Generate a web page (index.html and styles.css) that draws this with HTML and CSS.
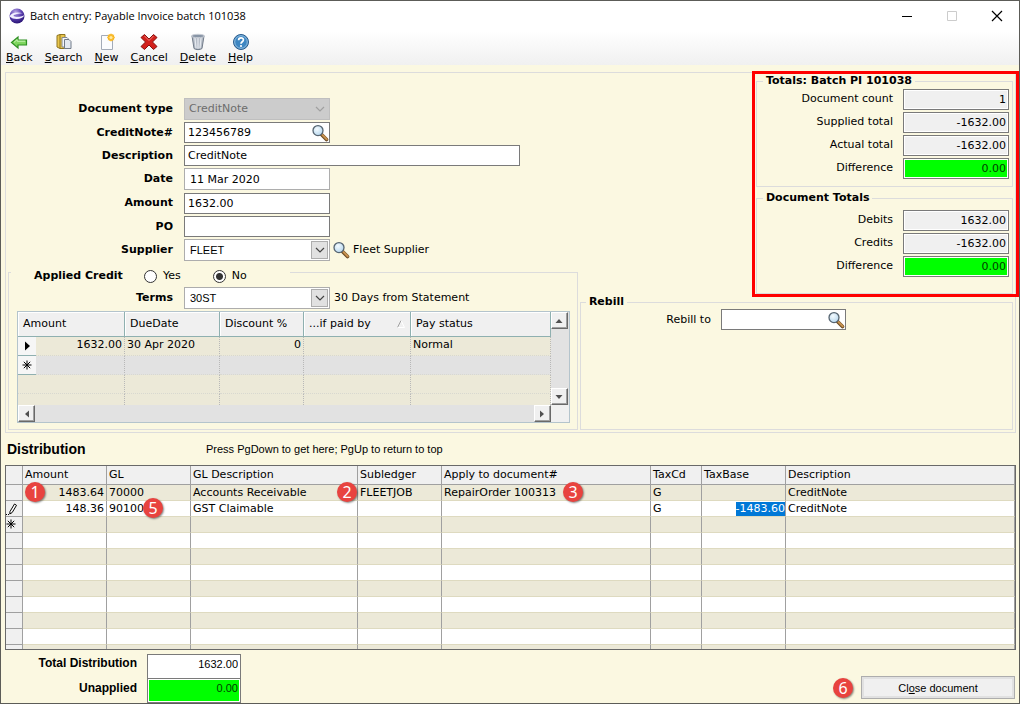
FILE: index.html
```
<!DOCTYPE html>
<html lang="en">
<head>
  <meta charset="UTF-8" />
  <meta name="viewport" content="width=device-width, initial-scale=1.0"/>
  <title>Batch entry: Payable Invoice batch 101038</title>
  <link rel="stylesheet" href="styles.css">
</head>
<body>
  <!-- shared icons -->
  <svg class="sprite" aria-hidden="true">
    <defs>
      <radialGradient id="glass" cx="0.4" cy="0.35" r="0.7">
        <stop offset="0" stop-color="#f4fbff"/>
        <stop offset="1" stop-color="#b4d6ee"/>
      </radialGradient>
    </defs>
    <symbol id="lens" viewBox="0 0 18 18">
      <path d="M10.5 10.5l5 5" stroke="#6b4a22" stroke-width="3.6" stroke-linecap="round"/>
      <path d="M11.5 11l4.2 4.2" stroke="#c89350" stroke-width="2" stroke-linecap="round"/>
      <circle cx="7" cy="6.6" r="5" fill="url(#glass)" stroke="#566470" stroke-width="1.3"/>
    </symbol>
    <symbol id="chevron" viewBox="0 0 10 6">
      <path d="M1 1l4 4 4-4" fill="none" stroke="currentColor" stroke-width="1.2"/>
    </symbol>
    <symbol id="star" viewBox="0 0 10 10">
      <path d="M5 0.5v9M0.5 5h9M1.8 1.8l6.4 6.4M8.2 1.8L1.8 8.2" stroke="#000" stroke-width="1"/>
    </symbol>
  </svg>

  <div class="window">
    <header class="titlebar">
      <svg class="app-icon" viewBox="0 0 16 16">
        <defs>
          <radialGradient id="orb" cx="0.4" cy="0.25" r="0.8">
            <stop offset="0" stop-color="#b9a8e6"/>
            <stop offset="0.5" stop-color="#5b3fb0"/>
            <stop offset="1" stop-color="#24106e"/>
          </radialGradient>
        </defs>
        <circle cx="8" cy="8" r="7.5" fill="url(#orb)"/>
        <path d="M0.500 8.500C2 4.500 8 3.800 14 5.300C9.500 5.500 5 6.300 4.500 8C6 9 11 9.400 15.300 7.200C13.500 11.500 5 12.500 0.500 8.500z" fill="#f3f0ff"/>
      </svg>
      <h1>Batch entry: Payable Invoice batch 101038</h1>
      <div class="window-buttons">
        <button type="button" aria-label="Minimize"><svg viewBox="0 0 12 12"><path d="M1 6.500h10" stroke="#000"/></svg></button>
        <button type="button" aria-label="Maximize" disabled><svg viewBox="0 0 12 12"><path d="M1.500 1.500h9v9h-9z" fill="none" stroke="#ccc"/></svg></button>
        <button type="button" aria-label="Close"><svg viewBox="0 0 12 12"><path d="M1 1l10 10M11 1L1 11" stroke="#000" stroke-width="1.2"/></svg></button>
      </div>
    </header>

    <nav class="toolbar">
      <button type="button">
        <svg viewBox="0 0 18 18"><path d="M1.500 9.500L8 4v3h8.500v5H8v3z" fill="#7fd65f" stroke="#2f8f22" stroke-width="1.200"/><path d="M4 9.300L7.200 6.600v1.600h8" fill="none" stroke="#c9f5b5"/></svg>
        <span><u>B</u>ack</span>
      </button>
      <button type="button">
        <svg viewBox="0 0 18 18"><path d="M2 2.500l3-1h5v14H5l-3-1.500z" fill="#e9c64c" stroke="#8f7420"/><path d="M5 1.500v14" stroke="#8f7420"/><path d="M7 4.500h5l1 1v8.500H7z" fill="#f4f6fa" stroke="#808894"/><path d="M9.500 6.500h4.500l2 2v7H9.500z" fill="#e3e9f1" stroke="#707a88"/></svg>
        <span><u>S</u>earch</span>
      </button>
      <button type="button">
        <svg viewBox="0 0 18 18"><path d="M3.500 2.500h11v14h-11z" fill="#fbfcfe" stroke="#a3abb8"/><circle cx="13" cy="4.500" r="3.400" fill="#f7b21c"/><path d="M13 0.500v8M9 4.500h8M10.300 1.800l5.400 5.400M15.700 1.800l-5.400 5.400" stroke="#f9c440" stroke-width="0.900"/><circle cx="13" cy="4.500" r="1.500" fill="#ffe9a0"/></svg>
        <span><u>N</u>ew</span>
      </button>
      <button type="button">
        <svg viewBox="0 0 18 18"><path d="M4.500 1.500L9 6l4.500-4.500 3.500 3L12.500 9l4.500 4.500-3.500 3L9 12l-4.500 4.500-3.500-3L5.500 9 1 4.500z" fill="#d3201c" stroke="#85100d" stroke-width="1"/><path d="M4.500 3L9 7.500 13.500 3" fill="none" stroke="#f08078"/></svg>
        <span><u>C</u>ancel</span>
      </button>
      <button type="button">
        <svg viewBox="0 0 18 18"><path d="M3 3l2 12.500c1.500 1.500 6.500 1.500 8 0L15 3z" fill="#b5bcc6" stroke="#727c8a"/><path d="M6 5l1 10M9 5v10.500M12 5l-1 10" stroke="#e6eaf0" stroke-width="1.200"/><ellipse cx="9" cy="3" rx="6.500" ry="1.700" fill="#8794a5" stroke="#c9ced6"/></svg>
        <span><u>D</u>elete</span>
      </button>
      <button type="button">
        <svg viewBox="0 0 18 18"><circle cx="9" cy="9" r="7.500" fill="#3d86c2" stroke="#2a5c8c"/><circle cx="9" cy="9" r="6.300" fill="none" stroke="#a6cbe8" stroke-width="0.800"/><path d="M6.600 7.300C6.600 4 11.600 4.200 11.400 7C11.300 8.800 9 8.800 9 10.800" fill="none" stroke="#fff" stroke-width="1.700"/><circle cx="9" cy="13" r="1.100" fill="#fff"/></svg>
        <span><u>H</u>elp</span>
      </button>
    </nav>

    <main>
      <form class="document">
        <div class="left">
          <div class="fields">
            <div class="row tall">
              <label for="doctype">Document type</label>
              <div class="combo">
                <select id="doctype" disabled><option>CreditNote</option></select>
                <span class="arrow"><svg><use href="#chevron"/></svg></span>
              </div>
            </div>
            <div class="row">
              <label for="credit-no">CreditNote#</label>
              <div class="lookup">
                <input type="text" id="credit-no" value="123456789" />
                <button type="button" aria-label="Find credit note"><svg><use href="#lens"/></svg></button>
              </div>
            </div>
            <div class="row">
              <label for="description">Description</label>
              <input type="text" id="description" class="wide" value="CreditNote" />
            </div>
            <div class="row tall">
              <label for="date">Date</label>
              <input type="text" id="date" class="light" value="11 Mar 2020" />
            </div>
            <div class="row tall">
              <label for="amount">Amount</label>
              <input type="text" id="amount" value="1632.00" />
            </div>
            <div class="row">
              <label for="po">PO</label>
              <input type="text" id="po" />
            </div>
            <div class="row tall">
              <label for="supplier">Supplier</label>
              <div class="combo">
                <select id="supplier"><option>FLEET</option></select>
                <span class="arrow"><svg><use href="#chevron"/></svg></span>
              </div>
              <button type="button" class="lens" aria-label="Find supplier"><svg><use href="#lens"/></svg></button>
              <span>Fleet Supplier</span>
            </div>
          </div>

          <fieldset class="credit">
            <legend>
              <b>Applied Credit</b>
              <label><input type="radio" name="applied" />Yes</label>
              <label><input type="radio" name="applied" checked />No</label>
            </legend>
            <div class="row tall">
              <label for="terms">Terms</label>
              <div class="combo">
                <select id="terms"><option>30ST</option></select>
                <span class="arrow"><svg><use href="#chevron"/></svg></span>
              </div>
              <span>30 Days from Statement</span>
            </div>

            <div class="schedule">
              <div class="schedule-view">
                <table>
                  <colgroup>
                    <col class="c-mark"><col class="c-amount"><col class="c-due"><col class="c-disc"><col class="c-paid"><col>
                  </colgroup>
                  <thead>
                    <tr>
                      <th colspan="2">Amount</th>
                      <th>DueDate</th>
                      <th>Discount %</th>
                      <th><div class="sorted">...if paid by <svg viewBox="0 0 8 8"><path d="M4 0.500L0.500 7.500" fill="none" stroke="#a0a0a0"/><path d="M4 0.500L7.500 7.500H0.500" fill="none" stroke="#fff"/></svg></div></th>
                      <th>Pay status</th>
                    </tr>
                  </thead>
                  <tbody>
                    <tr><td class="mark"><svg viewBox="0 0 10 10"><path d="M3 0.500v9L8 5z"/></svg></td><td class="num">1632.00</td><td>30 Apr 2020</td><td class="num">0</td><td></td><td>Normal</td></tr>
                    <tr class="new"><td class="mark"><svg><use href="#star"/></svg></td><td></td><td></td><td></td><td></td><td></td></tr>
                    <tr><td colspan="2"></td><td></td><td></td><td></td><td></td></tr>
                    <tr><td colspan="2"></td><td></td><td></td><td></td><td></td></tr>
                  </tbody>
                </table>
              </div>
              <div class="scroll-y">
                <button type="button" aria-label="Scroll up"><svg viewBox="0 0 8 8"><path d="M0.500 6L4 2l3.500 4z"/></svg></button>
                <button type="button" aria-label="Scroll down"><svg viewBox="0 0 8 8"><path d="M0.500 2L4 6l3.500-4z"/></svg></button>
              </div>
              <div class="scroll-x">
                <button type="button" aria-label="Scroll left"><svg viewBox="0 0 8 8"><path d="M6 0.500L2 4l4 3.500z"/></svg></button>
                <button type="button" aria-label="Scroll right"><svg viewBox="0 0 8 8"><path d="M2 0.500L6 4 2 7.500z"/></svg></button>
              </div>
            </div>
          </fieldset>
        </div>

        <div class="right">
          <div class="totals">
            <fieldset>
              <legend>Totals: Batch PI 101038</legend>
              <div class="total"><label for="doc-count">Document count</label><input type="text" id="doc-count" value="1" readonly /></div>
              <div class="total"><label for="supplied">Supplied total</label><input type="text" id="supplied" value="-1632.00" readonly /></div>
              <div class="total"><label for="actual">Actual total</label><input type="text" id="actual" value="-1632.00" readonly /></div>
              <div class="total"><label for="batch-diff">Difference</label><input type="text" id="batch-diff" class="ok" value="0.00" readonly /></div>
            </fieldset>
            <fieldset class="doc-totals">
              <legend>Document Totals</legend>
              <div class="total"><label for="debits">Debits</label><input type="text" id="debits" value="1632.00" readonly /></div>
              <div class="total"><label for="credits">Credits</label><input type="text" id="credits" value="-1632.00" readonly /></div>
              <div class="total"><label for="doc-diff">Difference</label><input type="text" id="doc-diff" class="ok" value="0.00" readonly /></div>
            </fieldset>
            <div class="highlight"></div>
          </div>
          <fieldset class="rebill">
            <legend>Rebill</legend>
            <div class="rebill-row">
              <label for="rebill">Rebill to</label>
              <div class="lookup">
                <input type="text" id="rebill" />
                <button type="button" aria-label="Find rebill account"><svg><use href="#lens"/></svg></button>
              </div>
            </div>
          </fieldset>
        </div>
      </form>

      <div class="dist-head">
        <h2>Distribution</h2>
        <span>Press PgDown to get here; PgUp to return to top</span>
      </div>

      <div class="dist">
        <table>
          <colgroup>
            <col class="d-mark"><col class="d-std"><col class="d-std"><col class="d-gldesc"><col class="d-std"><col class="d-apply"><col class="d-tax"><col class="d-std"><col>
          </colgroup>
          <thead>
            <tr><th></th><th>Amount</th><th>GL</th><th>GL Description</th><th>Subledger</th><th>Apply to document#</th><th>TaxCd</th><th>TaxBase</th><th>Description</th></tr>
          </thead>
          <tbody>
            <tr>
              <td></td>
              <td class="num"><span class="badge at-start">1</span>1483.64</td>
              <td>70000</td>
              <td>Accounts Receivable</td>
              <td><span class="badge at-edge">2</span>FLEETJOB</td>
              <td>RepairOrder 100313<span class="badge after">3</span></td>
              <td>G</td>
              <td></td>
              <td>CreditNote</td>
            </tr>
            <tr>
              <td class="mark"><svg viewBox="0 0 12 12"><path d="M4 8.500L8.500 1l2 1.300L6.200 9.500 3.800 11z" fill="#fff" stroke="#000"/><path d="M0 11.500h1M2 11.500h1" stroke="#000"/></svg></td>
              <td class="num">148.36</td>
              <td>90100<span class="badge after-tight">5</span></td>
              <td>GST Claimable</td>
              <td></td>
              <td></td>
              <td>G</td>
              <td class="num edit"><span class="selected">-1483.60</span></td>
              <td>CreditNote</td>
            </tr>
            <tr><td class="mark"><svg viewBox="0 0 12 12"><use href="#star" width="10" height="10"/></svg></td><td></td><td></td><td></td><td></td><td></td><td></td><td></td><td></td></tr>
            <tr><td></td><td></td><td></td><td></td><td></td><td></td><td></td><td></td><td></td></tr>
            <tr><td></td><td></td><td></td><td></td><td></td><td></td><td></td><td></td><td></td></tr>
            <tr><td></td><td></td><td></td><td></td><td></td><td></td><td></td><td></td><td></td></tr>
            <tr><td></td><td></td><td></td><td></td><td></td><td></td><td></td><td></td><td></td></tr>
            <tr><td></td><td></td><td></td><td></td><td></td><td></td><td></td><td></td><td></td></tr>
            <tr><td></td><td></td><td></td><td></td><td></td><td></td><td></td><td></td><td></td></tr>
            <tr><td></td><td></td><td></td><td></td><td></td><td></td><td></td><td></td><td></td></tr>
            <tr><td></td><td></td><td></td><td></td><td></td><td></td><td></td><td></td><td></td></tr>
          </tbody>
        </table>
      </div>
    </main>

    <footer>
      <div class="sums">
        <label for="total-dist">Total Distribution</label>
        <input type="text" id="total-dist" value="1632.00" readonly />
        <label for="unapplied">Unapplied</label>
        <input type="text" id="unapplied" class="ok" value="0.00" readonly />
      </div>
      <div class="actions">
        <span class="badge">6</span>
        <button type="button" class="close-btn"><span>Cl<u>o</u>se document</span></button>
      </div>
    </footer>
  </div>
</body>
</html>
```
FILE: styles.css
```
* {
  box-sizing: border-box;
}
body {
  margin: 0;
  font-family: "DejaVu Sans", Verdana, sans-serif;
  font-size: 11px;
  line-height: 14px;
  color: #000;
}
input, select, button {
  font: inherit;
  color: inherit;
  margin: 0;
  border-radius: 0;
}
button {
  padding: 0;
  border: none;
  background: none;
}
fieldset {
  margin: 0;
  padding: 0;
  border: 1px solid #dcdcdc;
  min-width: 0;
}
legend {
  margin-left: 6px;
  padding: 0 3px;
  font-weight: bold;
}
.sprite {
  position: absolute;
  width: 0;
  height: 0;
}

.window {
  display: flex;
  flex-direction: column;
  height: 100vh;
  border: 1px solid #5c5c58;
  background: #fbf8e1;
}

/* title bar */
.titlebar {
  display: flex;
  align-items: center;
  height: 30px;
  padding-left: 8px;
  background: #fff;
}
.app-icon {
  width: 16px;
  height: 16px;
}
.titlebar h1 {
  flex: 1;
  margin: 0 0 0 5px;
  font: 11px/16px "Open Sans", "Segoe UI", sans-serif;
}
.window-buttons {
  display: flex;
}
.window-buttons button {
  width: 45px;
  height: 30px;
}
.window-buttons svg {
  width: 12px;
  height: 12px;
  vertical-align: middle;
}

/* toolbar */
.toolbar {
  display: flex;
  gap: 12px;
  height: 34px;
  padding: 2px 5px 0;
  background: linear-gradient(#fff, #f0f0f0);
}
.toolbar button {
  display: flex;
  flex-direction: column;
  align-items: center;
}
.toolbar svg {
  width: 18px;
  height: 18px;
}

main {
  flex: 1;
  display: flex;
  flex-direction: column;
  min-height: 0;
  padding: 7px 3px 0 4px;
}

/* document form */
.document {
  display: grid;
  grid-template-columns: 25fr 19fr;
  column-gap: 2px;
  padding: 0 2px 2px;
  border: 1px solid #dcdcdc;
}
.left {
  padding-top: 25px;
}
.fields {
  display: flex;
  flex-direction: column;
  gap: 2px;
}
.row {
  display: flex;
  align-items: center;
  height: 21px;
}
.row.tall {
  height: 22px;
}
.row > label {
  width: 165px;
  margin-right: 11px;
  text-align: right;
  font-weight: bold;
}
.fields input, .lookup input, .total input {
  width: 146px;
  height: 21px;
  padding: 0 3px;
  border: 1px solid #7a7a7a;
  background: #fff;
}
.fields input.wide {
  width: 336px;
}
.fields input.light {
  height: 22px;
  padding-left: 5px;
  border-color: #adadad;
}
.combo, .lookup {
  position: relative;
}
.combo select {
  display: block;
  width: 146px;
  height: 22px;
  padding: 0 20px 0 5px;
  border: 1px solid #adadad;
  background: #fff;
  appearance: none;
  font-family: "Liberation Sans", Arial, sans-serif;
}
.combo select:disabled {
  padding-left: 4px;
  border-color: #bfbfbf;
  background: #ccc;
  color: #6d6d6d;
  opacity: 1;
  font-family: inherit;
}
.combo .arrow {
  position: absolute;
  top: 2px;
  right: 2px;
  bottom: 2px;
  display: flex;
  align-items: center;
  justify-content: center;
  width: 17px;
  border: 1px solid #adadad;
  background: #e1e1e1;
  color: #444;
  pointer-events: none;
}
.combo select:disabled + .arrow {
  border-color: transparent;
  background: none;
  color: #a0a0a0;
}
.arrow svg {
  width: 10px;
  height: 6px;
}
.lookup button {
  position: absolute;
  top: 2px;
  right: 1px;
}
.lookup svg, .lens svg {
  display: block;
  width: 18px;
  height: 18px;
}
.row .lens {
  margin: 0 3px 0 2px;
}
.row > span {
  margin-left: 4px;
}
.row .lens + span {
  margin-left: 0;
}

/* applied credit */
.credit {
  padding: 0 7px 6px 8px;
}
.credit legend {
  display: flex;
  align-items: center;
  height: 22px;
  margin-left: -6px;
  padding: 8px 0 0 23px;
  width: 279px;
}
.credit legend label {
  display: flex;
  align-items: center;
  font-weight: normal;
}
.credit legend b {
  width: 110px;
}
.credit legend label + label {
  margin-left: 32px;
}
.credit input[type=radio] {
  appearance: none;
  width: 13px;
  height: 13px;
  margin: 0 6px 0 0;
  border: 1px solid #333;
  border-radius: 50%;
  background: #fff;
}
.credit input[type=radio]:checked {
  background: radial-gradient(#333 0 3px, #fff 4px);
}
.credit .row {
  margin-top: 4px;
}
.credit .row > label {
  width: 156px;
  margin-right: 11px;
}

.schedule {
  display: grid;
  grid-template-columns: 1fr 18px;
  grid-template-rows: 93px 17px;
  margin-top: 2px;
  border: 1px solid #b4c4cc;
  background: #f0f0f0;
}
.schedule-view {
  overflow: hidden;
}
table {
  width: 100%;
  table-layout: fixed;
  border-collapse: separate;
  border-spacing: 0;
}
th {
  font-weight: normal;
  text-align: left;
}
th, td {
  padding: 0 2px;
  white-space: nowrap;
}
.num {
  text-align: right;
}
.c-mark { width: 18px; }
.c-amount { width: 89px; }
.c-due { width: 95px; }
.c-disc { width: 84px; }
.c-paid { width: 107px; }

.schedule th {
  height: 25px;
  padding: 0 5px;
  border-right: 1px solid #8fb0b0;
  border-bottom: 1px solid #8fb0b0;
  background: #f0f0f0;
  box-shadow: inset 1px 1px #fff;
}
.sorted {
  display: flex;
  align-items: center;
  justify-content: space-between;
}
.sorted svg {
  width: 8px;
  height: 8px;
}
.schedule td {
  height: 19px;
  padding-bottom: 3px;
  border-right: 1px dotted #b8b8b8;
  border-bottom: 1px dotted #d8d8d0;
  background: #ece9d8;
}
.schedule .new td {
  background: #e2e2e2;
}
.schedule td.mark, .schedule .new td.mark {
  padding: 0;
  border-right: none;
  border-bottom: 1px solid #8fb0b0;
  background: #f6f6f6;
  text-align: center;
}
.mark svg {
  display: block;
  width: 10px;
  height: 10px;
  margin: 0 auto;
}
.scroll-y, .scroll-x {
  display: flex;
  justify-content: space-between;
  background: #e2e2e2;
}
.scroll-y {
  flex-direction: column;
}
.scroll-y button, .scroll-x button {
  display: flex;
  align-items: center;
  justify-content: center;
  width: 17px;
  height: 17px;
  border: 1px solid;
  border-color: #fff #696969 #696969 #fff;
  background: #f0f0f0;
  box-shadow: inset -1px -1px #a0a0a0;
}
.scroll-y svg, .scroll-x svg {
  width: 8px;
  height: 8px;
  fill: #505050;
}

/* totals */
.right {
  display: flex;
  flex-direction: column;
  padding-top: 1px;
}
.totals {
  position: relative;
  align-self: flex-end;
  width: 257px;
}
.total {
  display: flex;
  justify-content: flex-end;
  height: 21px;
  margin: 0 3px 2px 0;
}
.total label {
  margin-right: 10px;
  line-height: 20px;
}
.total input {
  width: 106px;
  padding: 0 2px;
  text-align: right;
  background: #f0f0f0;
  box-shadow: inset 0 0 0 1px #fff;
}
.total input.ok, .sums input.ok {
  background: #0f0;
  color: #003c00;
}
.totals fieldset {
  padding: 1px 0 5px;
}
.totals .doc-totals {
  margin-top: 4px;
  padding: 5px 0 14px;
}
.highlight {
  position: absolute;
  inset: -3px -6px -3px -4px;
  border: 3px solid #f00;
  pointer-events: none;
}
.rebill {
  flex: 1;
  margin-top: 1px;
}
.rebill legend {
  margin-left: 5px;
}
.rebill-row {
  display: flex;
  align-items: center;
}
.rebill-row label {
  width: 130px;
  margin-right: 10px;
  text-align: right;
}
.rebill .lookup input {
  width: 125px;
}

/* distribution */
.dist-head {
  display: flex;
  align-items: center;
  height: 32px;
  padding: 0 2px;
  font-family: "Liberation Sans", Arial, sans-serif;
}
.dist-head h2 {
  width: 199px;
  margin: 0;
  font-size: 14px;
}
.dist {
  flex: 1 1 0;
  min-height: 0;
  overflow: hidden;
  border: 1px solid #696969;
}
.d-mark { width: 17px; }
.d-std { width: 84px; }
.d-gldesc { width: 167px; }
.d-apply { width: 209px; }
.d-tax { width: 51px; }
.dist th {
  height: 19px;
  border-right: 1px solid #a0a0a0;
  border-bottom: 1px solid #a0a0a0;
  background: #f0f0f0;
}
.dist td {
  position: relative;
  height: 16px;
  border-right: 1px solid #a0a0a0;
  border-bottom: 1px solid #dedac0;
  background: #fff;
}
.dist tr:nth-child(odd) td {
  background: #ece9d8;
}
.dist td:first-child, .dist tr:nth-child(odd) td:first-child {
  padding: 0;
  border-bottom-color: #a0a0a0;
  background: #f0f0f0;
}
.dist .mark svg {
  width: 12px;
  height: 12px;
  margin: 0;
}
.dist td.edit {
  padding-right: 0;
}
.selected {
  display: block;
  width: fit-content;
  margin-left: auto;
  background: #0078d7;
  color: #fff;
}
.badge {
  display: inline-block;
  width: 20px;
  height: 20px;
  border-radius: 50%;
  background: #e8433f;
  box-shadow: 1px 1px 2px #0007;
  color: #fff;
  font: 16px/20px "Noto Sans", sans-serif;
  text-align: center;
}
.dist .badge {
  position: absolute;
  z-index: 1;
  top: -3px;
}
.dist .at-start { left: 2px; }
.dist .at-edge { left: -21px; }
.dist .after { left: 121px; }
.dist .after-tight { left: 36px; }

/* footer */
footer {
  display: flex;
  justify-content: space-between;
  align-items: flex-end;
  padding: 4px 4px 0 0;
  font-family: "Liberation Sans", Arial, sans-serif;
}
.sums {
  display: grid;
  grid-template-columns: 136px 94px;
  column-gap: 10px;
}
.sums label {
  padding-top: 2px;
  text-align: right;
  font-size: 12px;
  font-weight: bold;
}
.sums input {
  height: 25px;
  padding: 0 2px 5px;
  border: 1px solid #7a7a7a;
  background: #fff;
  box-shadow: inset 0 0 0 1px #fff;
  text-align: right;
}
.sums input.ok {
  margin-top: -1px;
}
.actions {
  display: flex;
  align-items: center;
  gap: 8px;
  padding-bottom: 4px;
}
.close-btn {
  width: 154px;
  height: 23px;
  border: 1px solid #adadad;
  background: #f0f0f0;
  box-shadow: inset 0 0 0 2px #e1e1e1;
}
```
